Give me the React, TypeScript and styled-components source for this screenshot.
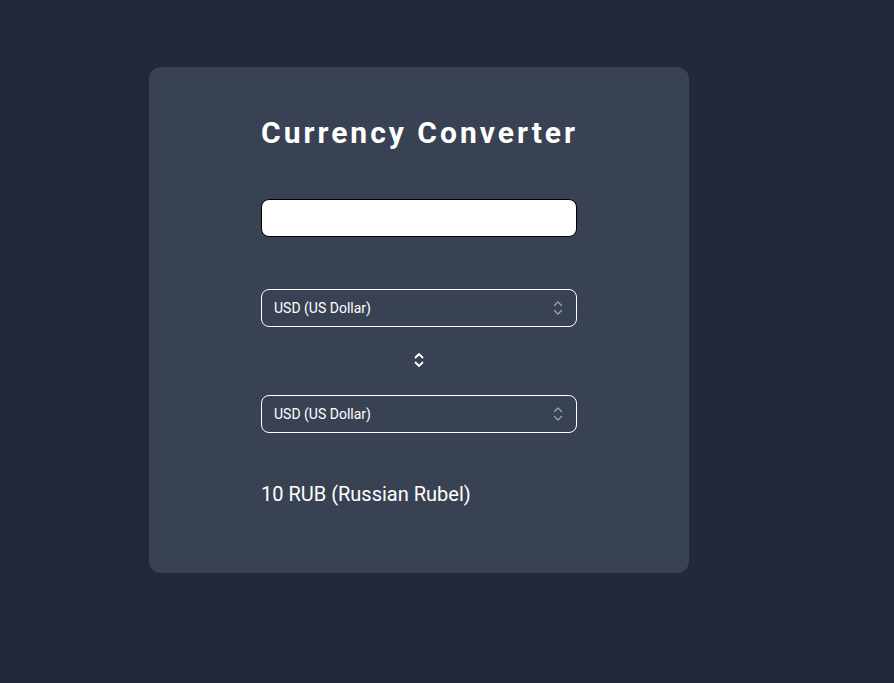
import React from "react";
import styled, { createGlobalStyle } from "styled-components";

const Global = createGlobalStyle`
  html, body { margin: 0; padding: 0; background: #222a3a; }
  body { font-family: Roboto, "Liberation Sans", sans-serif; color: #fff; min-height: 683px; }
`;

const Page = styled.div`
  padding: 67px 0 0 149px;
`;

const Card = styled.div`
  width: 540px;
  box-sizing: border-box;
  background: #394252;
  border-radius: 12px;
  padding: 48px 112px 67px;
  display: flex;
  flex-direction: column;
`;

const Title = styled.h1`
  margin: 0;
  font-size: 30px;
  line-height: 36px;
  font-weight: 700;
  letter-spacing: 3px;
  white-space: nowrap;
  color: #fff;
`;

const AmountInput = styled.input`
  margin-top: 48px;
  height: 38px;
  box-sizing: border-box;
  width: 100%;
  background: #fff;
  border: 1px solid #000;
  border-radius: 8px;
  outline: none;
  padding: 0 12px;
  font-family: inherit;
  font-size: 14px;
`;

const SelectBox = styled.div<{ $mt: number }>`
  margin-top: ${(p) => p.$mt}px;
  height: 38px;
  box-sizing: border-box;
  border: 1px solid #fff;
  border-radius: 8px;
  display: flex;
  align-items: center;
  justify-content: space-between;
  padding: 0 13px 0 12px;
  font-size: 14px;
  color: #fff;
`;

const SwapRow = styled.div`
  margin-top: 25px;
  display: flex;
  justify-content: center;
  height: 16px;
`;

const Result = styled.div`
  margin-top: 50px;
  font-size: 20px;
  line-height: 23px;
  color: #fff;
`;

const UpDown = ({ color, w }: { color: string; w: number }) => (
  <svg width="10" height="16" viewBox="0 0 10 16" fill="none">
    <path d="M1.5 5.5 L5 2 L8.5 5.5" stroke={color} strokeWidth={w} strokeLinecap="round" strokeLinejoin="round" />
    <path d="M1.5 10.5 L5 14 L8.5 10.5" stroke={color} strokeWidth={w} strokeLinecap="round" strokeLinejoin="round" />
  </svg>
);

export default function App() {
  return (
    <>
      <Global />
      <Page>
        <Card>
          <Title>Currency Converter</Title>
          <AmountInput type="text" />
          <SelectBox $mt={52}>
            <span>USD (US Dollar)</span>
            <UpDown color="#9aa1ad" w={1.3} />
          </SelectBox>
          <SwapRow>
            <UpDown color="#fff" w={1.8} />
          </SwapRow>
          <SelectBox $mt={27}>
            <span>USD (US Dollar)</span>
            <UpDown color="#9aa1ad" w={1.3} />
          </SelectBox>
          <Result>10 RUB (Russian Rubel)</Result>
        </Card>
      </Page>
    </>
  );
}
